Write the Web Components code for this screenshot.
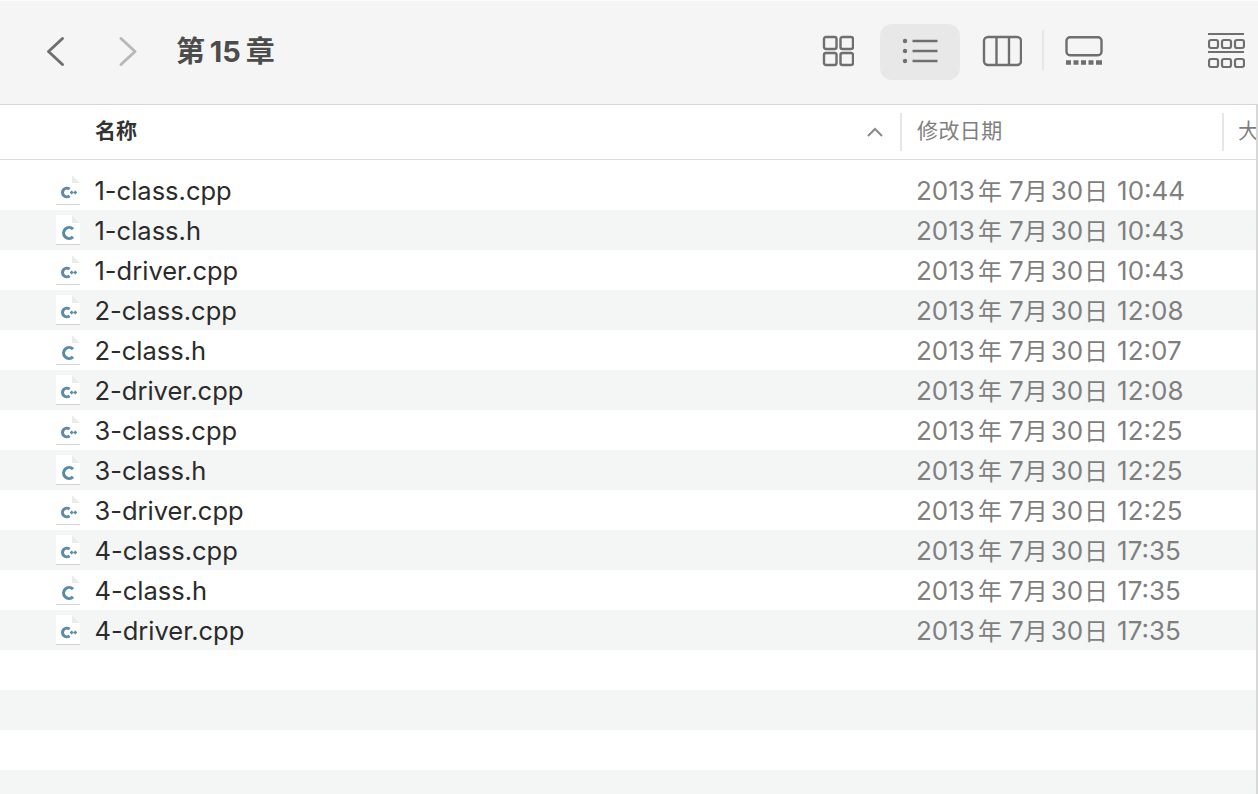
<!DOCTYPE html>
<html lang="zh"><head><meta charset="utf-8">
<style>
html,body{margin:0;padding:0;background:#fff;height:794px;overflow:hidden}
body{font-family:"Inter","Liberation Sans","Noto Sans CJK SC",sans-serif}
</style></head><body>
<finder-window>
<finder-toolbar slot="toolbar" title-text="第 15 章"></finder-toolbar>
<list-header slot="header"></list-header>
<file-row name="1-class.cpp" date="10:44" kind="cpp"></file-row>
<file-row name="1-class.h" date="10:43" kind="h" alt></file-row>
<file-row name="1-driver.cpp" date="10:43" kind="cpp"></file-row>
<file-row name="2-class.cpp" date="12:08" kind="cpp" alt></file-row>
<file-row name="2-class.h" date="12:07" kind="h"></file-row>
<file-row name="2-driver.cpp" date="12:08" kind="cpp" alt></file-row>
<file-row name="3-class.cpp" date="12:25" kind="cpp"></file-row>
<file-row name="3-class.h" date="12:25" kind="h" alt></file-row>
<file-row name="3-driver.cpp" date="12:25" kind="cpp"></file-row>
<file-row name="4-class.cpp" date="17:35" kind="cpp" alt></file-row>
<file-row name="4-class.h" date="17:35" kind="h"></file-row>
<file-row name="4-driver.cpp" date="17:35" kind="cpp" alt></file-row>
<file-row></file-row><file-row alt></file-row><file-row></file-row><file-row alt></file-row>
</finder-window>
<script>
const CJK='"Inter","Noto Sans CJK SC",sans-serif';
class FinderWindow extends HTMLElement{constructor(){super();this.attachShadow({mode:'open'}).innerHTML=`
<style>:host{display:flex;flex-direction:column;width:1258px;height:794px;overflow:hidden;background:#fff;position:relative}
::slotted(*){flex:none}
.rows{display:flex;flex-direction:column;padding-top:10px}
.sb{position:absolute;right:0;top:105px;width:2px;bottom:0;background:#d8d8d8}</style>
<slot name="toolbar"></slot><slot name="header"></slot><div class="rows"><slot></slot></div><div class="sb"></div>`}}
class FinderToolbar extends HTMLElement{constructor(){super();const t=this.getAttribute('title-text');this.attachShadow({mode:'open'}).innerHTML=`
<style>:host{display:flex;align-items:center;height:103px;background:#f5f5f5;border-top:1px solid #fbfbfb;border-bottom:1px solid #d6d6d6;color:#6f6f6f}
.nav{display:flex;margin-left:44px;gap:47px;margin-bottom:2px}svg{display:block;fill:none;stroke:currentColor}
.title{margin-left:37px;font:700 29px/1 ${CJK};color:#4c4c4c;word-spacing:-2px;margin-bottom:2px}
.sp{flex:1}.views{display:flex;align-items:center;margin:0 13px 1px 0}
.btn{width:80px;height:56px;border-radius:12px;display:flex;align-items:center;justify-content:center;flex:none}
.btn svg{margin-bottom:2px}
.btn+.btn{margin-left:2px}
.on{background:#e8e8e8}.div{width:2px;height:40px;background:#e6e6e6;margin-bottom:4px}
.gal{width:164px;justify-content:flex-start;padding-left:21px;box-sizing:border-box}
.grp{width:37px}
</style>
<div class="nav">
<svg width="24" height="32" viewBox="0 0 24 32" stroke-width="3" stroke-linecap="round" stroke-linejoin="round"><path d="M18.500 2.500 4.500 15.500 18.500 28.500"/></svg>
<svg width="24" height="32" viewBox="0 0 24 32" stroke-width="3" stroke-linecap="round" stroke-linejoin="round" style="color:#b8b8b8"><path d="M6 2.500 20 15.500 6 28.500"/></svg>
</div>
<div class="title">${t}</div><div class="sp"></div>
<div class="views">
<div class="btn"><svg width="32" height="32" viewBox="0 0 32 32" stroke-width="2.400"><rect x="2" y="2" width="12.500" height="12" rx="2"/><rect x="18.500" y="2" width="12.500" height="12" rx="2"/><rect x="2" y="18" width="12.500" height="12" rx="2"/><rect x="18.500" y="18" width="12.500" height="12" rx="2"/></svg></div>
<div class="btn on"><svg width="36" height="28" viewBox="0 0 36 28" stroke-width="2.400"><circle cx="3" cy="4" r="2.200" fill="currentColor" stroke="none"/><circle cx="3" cy="14" r="2.200" fill="currentColor" stroke="none"/><circle cx="3" cy="24" r="2.200" fill="currentColor" stroke="none"/><path d="M10.500 4h25M10.500 14h25M10.500 24h25"/></svg></div>
<div class="btn"><svg width="40" height="32" viewBox="0 0 40 32" stroke-width="2.400"><rect x="2" y="2" width="37" height="28" rx="4"/><path d="M14.500 2v28M27 2v28"/></svg></div>
<div class="div"></div>
<div class="btn gal"><svg width="38" height="32" viewBox="0 0 38 32"><rect x="1.500" y="2.200" width="35" height="18" rx="3.500" stroke-width="2.400"/><path d="M1 27.500h5M8.500 27.500h5M16 27.500h5M23.500 27.500h5M31 27.500h6" stroke-width="4.500"/></svg></div>
<div class="btn grp" style="margin-left:0"><svg width="37" height="36" viewBox="0 0 37 36" stroke-width="2.200"><path d="M0 1h36M0 19h36"/><rect x="1" y="7" width="9" height="8" rx="2"/><rect x="14" y="7" width="9" height="8" rx="2"/><rect x="27" y="7" width="9" height="8" rx="2"/><rect x="1" y="26" width="9" height="8" rx="2"/><rect x="14" y="26" width="9" height="8" rx="2"/><rect x="27" y="26" width="9" height="8" rx="2"/></svg></div>
</div>`}}
class ListHeader extends HTMLElement{constructor(){super();this.attachShadow({mode:'open'}).innerHTML=`
<style>:host{display:flex;align-items:center;height:54px;border-bottom:1px solid #dcdcdc;background:#fff;font:500 21px/1 ${CJK};overflow:hidden}
.n{width:805px;margin-left:95px;font-weight:700;color:#333;flex:none;display:flex;align-items:center;justify-content:space-between;padding-right:17px;box-sizing:border-box}
.n span,.d span,.s span{position:relative;top:-2px}
svg{display:block;fill:none;stroke:#8a8a8a;stroke-width:2}
.sep{width:2px;height:38px;background:#e6e6e6;flex:none}
.d{width:320px;padding-left:15px;box-sizing:border-box;color:#7f7f7f;font-weight:400;flex:none;letter-spacing:.4px}
.s{padding-left:14px;color:#7f7f7f;font-weight:400}</style>
<div class="n"><span>名称</span><svg width="16" height="10" viewBox="0 0 16 10"><path d="M1 9 8 2 15 9"/></svg></div>
<div class="sep"></div><div class="d"><span>修改日期</span></div><div class="sep"></div><div class="s"><span>大</span></div>`}}
class FileRow extends HTMLElement{constructor(){super();const n=this.getAttribute('name'),d=this.getAttribute('date'),k=this.getAttribute('kind');
const ic=k==='cpp'?`<path d="M13.560 15.200A4.300 4.300 0 1 0 13.560 21.800" stroke="#5a8ba8" stroke-width="3" fill="none"/><path d="M14 18.500h3.400M15.700 16.800v3.400M17.600 18.500h3.400M19.300 16.800v3.400" stroke="#5a8ba8" stroke-width="1.500" fill="none"/>`:`<path d="M17 15.100A5.500 5.500 0 1 0 17 22.900" stroke="#5a8ba8" stroke-width="3.200" fill="none"/>`;
this.attachShadow({mode:'open'}).innerHTML=`
<style>:host{display:flex;align-items:center;height:40px;flex:none;background:#fff;font:400 25.500px/1 ${CJK}}
:host([alt]){background:#f4f5f5}
.i{width:95px;flex:none;padding-left:56px;box-sizing:border-box}
svg{display:block}
.n{width:822px;flex:none;color:#2b2b2b;margin-left:-.5px;padding-top:2px}
.d{color:#7f7f7f;white-space:pre;font-size:26px;padding-top:2px;margin-left:-.5px}
.c{font-size:24px}
.y{margin:0 7px 0 3px}.m{margin:0 3px 0 0}.r{margin:0 0 0 1px}
.t{margin-left:9px}</style>
${n?`<div class="i"><svg width="24" height="32" viewBox="0 0 24 32"><path d="M0 1H16L24 9V30H0Z" fill="#fff"/><path d="M16 1 24 9H16Z" fill="#ebebeb"/><path d="M0 30.500H24" stroke="#d4d4d4"/>${ic}</svg></div><div class="n">${n}</div><div class="d">2013<span class="c y">年</span>7<span class="c m">月</span>30<span class="c r">日</span><span class="t">${d}</span></div>`:''}`}}
customElements.define('finder-window',FinderWindow);
customElements.define('finder-toolbar',FinderToolbar);
customElements.define('list-header',ListHeader);
customElements.define('file-row',FileRow);
</script></body></html>
